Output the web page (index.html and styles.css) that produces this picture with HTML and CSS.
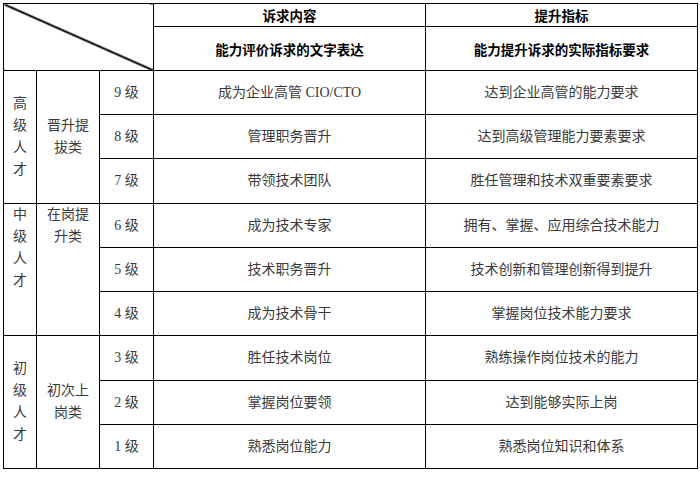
FILE: index.html
```html
<!DOCTYPE html>
<html lang="zh-CN">
<head>
<meta charset="utf-8">
<link rel="stylesheet" href="styles.css">
</head>
<body>
<table class="grid">
  <colgroup>
    <col class="c1"><col class="c2"><col class="c3"><col class="c4"><col class="c5">
  </colgroup>
  <tr class="h1">
    <td class="diag" rowspan="2" colspan="3"></td>
    <th>诉求内容</th>
    <th>提升指标</th>
  </tr>
  <tr class="h2">
    <th>能力评价诉求的文字表达</th>
    <th>能力提升诉求的实际指标要求</th>
  </tr>
  <tr>
    <td class="grp" rowspan="3">高级人才</td>
    <td class="cat" rowspan="3">晋升提拔类</td>
    <td class="lv">9 级</td>
    <td>成为企业高管 CIO/CTO</td>
    <td>达到企业高管的能力要求</td>
  </tr>
  <tr>
    <td class="lv">8 级</td>
    <td>管理职务晋升</td>
    <td>达到高级管理能力要素要求</td>
  </tr>
  <tr class="tall">
    <td class="lv">7 级</td>
    <td>带领技术团队</td>
    <td>胜任管理和技术双重要素要求</td>
  </tr>
  <tr>
    <td class="grp top" rowspan="3">中级人才</td>
    <td class="cat top" rowspan="3">在岗提升类</td>
    <td class="lv">6 级</td>
    <td>成为技术专家</td>
    <td>拥有、掌握、应用综合技术能力</td>
  </tr>
  <tr>
    <td class="lv">5 级</td>
    <td>技术职务晋升</td>
    <td>技术创新和管理创新得到提升</td>
  </tr>
  <tr>
    <td class="lv">4 级</td>
    <td>成为技术骨干</td>
    <td>掌握岗位技术能力要求</td>
  </tr>
  <tr class="tall">
    <td class="grp" rowspan="3">初级人才</td>
    <td class="cat" rowspan="3">初次上岗类</td>
    <td class="lv">3 级</td>
    <td>胜任技术岗位</td>
    <td>熟练操作岗位技术的能力</td>
  </tr>
  <tr>
    <td class="lv">2 级</td>
    <td>掌握岗位要领</td>
    <td>达到能够实际上岗</td>
  </tr>
  <tr>
    <td class="lv">1 级</td>
    <td>熟悉岗位能力</td>
    <td>熟悉岗位知识和体系</td>
  </tr>
</table>
</body>
</html>
```

FILE: styles.css
```css
html, body {
  margin: 0;
  padding: 0;
  background: #fff;
}
body {
  padding: 3px 0 0 3px;
}
.grid {
  border-collapse: collapse;
  table-layout: fixed;
  width: 694px;
  font-family: "Liberation Serif", "Noto Sans CJK SC", serif;
  font-size: 14px;
  color: #3a3a3a;
}
.c1 { width: 33px; }
.c2 { width: 63px; }
.c3 { width: 54px; }
.c4 { width: 272px; }
.c5 { width: 272px; }
.grid td, .grid th {
  border: 1px solid #000;
  padding: 0 6px;
  text-align: center;
  vertical-align: middle;
  height: 43px;
  line-height: 20px;
}
.grid th {
  font-family: "Noto Sans CJK SC", sans-serif;
  font-weight: bold;
  color: #000;
  font-size: 13.5px;
}
.grid tr.h1 th {
  height: 22px;
  line-height: 18px;
}
.grid tr.tall td {
  height: 44px;
}
.diag {
  background: linear-gradient(to top right,
    transparent calc(50% - 1.3px),
    #000 calc(50% - 0.7px),
    #000 calc(50% + 0.7px),
    transparent calc(50% + 1.3px));
}
.grid td.grp,
.grid td.cat {
  line-height: 22px;
}
.grid td.top {
  vertical-align: top;
  padding-top: 0;
}
```
